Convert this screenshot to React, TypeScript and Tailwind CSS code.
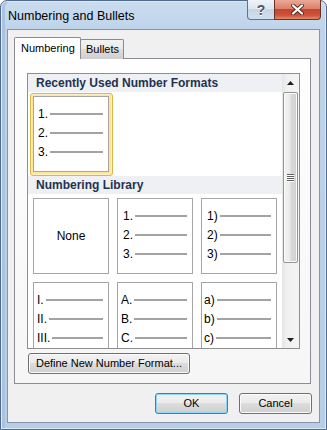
import React from 'react';

const font = "font-['Liberation_Sans',Arial,sans-serif]";

function Preview({ labels, pad }: { labels: string[]; pad: string }) {
  return (
    <div className={`flex h-full flex-col pt-[7px] pr-[5px] ${pad}`}>
      {labels.map((l) => (
        <div key={l} className="flex h-[19px] items-center">
          <span className="text-[12px] leading-none text-black">{l}</span>
          <span className="ml-[2px] h-[2px] flex-1 bg-[#a3a3a3]" />
        </div>
      ))}
    </div>
  );
}

function Box({ children }: { children: React.ReactNode }) {
  return <div className="h-[76px] w-[76px] border border-[#a5a5a5] bg-white">{children}</div>;
}

function Cell({ children }: { children: React.ReactNode }) {
  return <div className="flex h-[84px] w-[84px] shrink-0 items-center justify-center">{children}</div>;
}

function Header({ text }: { text: string }) {
  return (
    <div className="flex h-[18px] shrink-0 items-center bg-[#eef0f3] pl-[8px] text-[12px] font-bold text-[#1f3251]">
      {text}
    </div>
  );
}

function WinButton({ label, primary, className }: { label: string; primary?: boolean; className: string }) {
  return (
    <div
      className={`flex h-[21px] items-center justify-center rounded-[3px] border text-[11px] text-black bg-[linear-gradient(#f2f2f2,#ebebeb_45%,#dddddd_50%,#cfcfcf)] ${
        primary
          ? 'border-[#3c7fb1] shadow-[inset_0_0_0_1px_#8fd6f6]'
          : 'border-[#707070] shadow-[inset_0_0_0_1px_#fbfbfb]'
      } ${className}`}
    >
      {label}
    </div>
  );
}

function Triangle({ up }: { up?: boolean }) {
  return (
    <svg width="7" height="4" viewBox="0 0 7 4">
      <path d={up ? 'M0 4 L3.5 0 L7 4 Z' : 'M0 0 L3.5 4 L7 0 Z'} fill="#1e1e1e" />
    </svg>
  );
}

export default function App() {
  return (
    <div className={`h-[430px] w-[327px] ${font}`}>
      <div className="flex h-full flex-col rounded-t-[7px] border border-[#4f6a8b] bg-[linear-gradient(180deg,#cbdcef_0%,#bed3ea_7%,#b8cee7_100%)] shadow-[inset_0_0_0_1px_#dfeaf6,inset_3px_0_0_1px_#a9c3e0]">
        {/* title bar */}
        <div className="flex h-[28px] shrink-0 items-start justify-between pl-[7px] pr-[5px]">
          <span className="self-center pt-[2px] text-[12.5px] text-black">Numbering and Bullets</span>
          <div className="-mt-px flex">
            <div className="flex h-[20px] w-[28px] items-center justify-center rounded-bl-[4px] border border-t-0 border-[#5d7594] bg-[linear-gradient(#eef3f9,#dde6f1_45%,#c6d4e5_50%,#d3dfed)] text-[14px] font-bold leading-none text-[#4a5868] [text-shadow:0_1px_0_#ffffff]">
              ?
            </div>
            <div className="-ml-px flex h-[20px] w-[47px] items-center justify-center rounded-br-[4px] border border-t-0 border-[#6b3128] bg-[linear-gradient(#eaa996,#db816b_45%,#c5452e_50%,#cf523a_80%,#e48a69)]">
              <svg width="13" height="11" viewBox="0 0 13 11">
                <path d="M2 1.5 L11 9.5 M11 1.5 L2 9.5" stroke="#5a2a22" strokeWidth="4" strokeLinecap="round" />
                <path d="M2 1.5 L11 9.5 M11 1.5 L2 9.5" stroke="#ffffff" strokeWidth="2.2" strokeLinecap="round" />
              </svg>
            </div>
          </div>
        </div>

        {/* client area */}
        <div className="mx-[6px] mb-[6px] flex flex-1 flex-col border border-[#8594a8] bg-[#f0f0f0] pt-[7px]">
          <div className="pl-[6px] pr-[8px]">
            {/* tabs */}
            <div className="flex h-[22px] items-end">
              <div className="relative z-10 flex h-[22px] w-[67px] items-center rounded-t-[2px] border border-b-0 border-[#898c95] bg-white pb-[1px] pl-[6px] text-[11px] text-black">
                Numbering
              </div>
              <div className="-ml-px flex h-[20px] w-[44px] items-center rounded-t-[2px] border border-b-0 border-[#898c95] bg-[linear-gradient(#f2f2f2,#ebebeb_45%,#dddddd_50%,#cfcfcf)] pl-[5px] text-[11px] text-black">
                Bullets
              </div>
            </div>

            {/* panel */}
            <div className="-mt-px border border-[#898c95] bg-[linear-gradient(#fefefe,#f6f6f6)] pt-[14px] pr-[10px] pb-[9px] pl-[12px]">
              <div className="flex h-[276px] border border-[#8e8f8f] bg-white">
                <div className="flex flex-1 flex-col overflow-hidden">
                  <Header text="Recently Used Number Formats" />
                  <div className="flex pl-[1px]">
                    <Cell>
                      <div className="flex h-[83px] w-[83px] items-center justify-center rounded-[3px] border border-[#e0b445] bg-[#fde59a] shadow-[inset_0_0_0_1px_#fff0c0]">
                        <Box>
                          <Preview labels={['1.', '2.', '3.']} pad="pl-[4px]" />
                        </Box>
                      </div>
                    </Cell>
                  </div>
                  <Header text="Numbering Library" />
                  <div className="flex pl-[1px]">
                    <Cell>
                      <Box>
                        <div className="flex h-full items-center justify-center text-[12px] text-black">None</div>
                      </Box>
                    </Cell>
                    <Cell>
                      <Box>
                        <Preview labels={['1.', '2.', '3.']} pad="pl-[5px]" />
                      </Box>
                    </Cell>
                    <Cell>
                      <Box>
                        <Preview labels={['1)', '2)', '3)']} pad="pl-[5px]" />
                      </Box>
                    </Cell>
                  </div>
                  <div className="flex pl-[1px]">
                    <Cell>
                      <Box>
                        <Preview labels={['I.', 'II.', 'III.']} pad="pl-[3px]" />
                      </Box>
                    </Cell>
                    <Cell>
                      <Box>
                        <Preview labels={['A.', 'B.', 'C.']} pad="pl-[3px]" />
                      </Box>
                    </Cell>
                    <Cell>
                      <Box>
                        <Preview labels={['a)', 'b)', 'c)']} pad="pl-[2px]" />
                      </Box>
                    </Cell>
                  </div>
                </div>

                {/* scrollbar */}
                <div className="flex w-[17px] shrink-0 flex-col bg-[linear-gradient(to_right,#e6e6e6,#f1f1f1_35%,#f4f4f4)]">
                  <div className="flex h-[17px] items-center justify-center">
                    <Triangle up />
                  </div>
                  <div className="mx-[1px] mt-[1px] flex h-[171px] flex-col items-center justify-center gap-[1px] rounded-[2px] border border-[#959595] bg-[linear-gradient(to_right,#f4f4f4,#e9e9e9_45%,#d8d8d8_55%,#d0d0d0)] shadow-[inset_0_0_0_1px_#fafafa]">
                    {[0, 1, 2, 3].map((i) => (
                      <span key={i} className="h-[1px] w-[7px] bg-[#606060] shadow-[0_1px_0_#ffffff]" />
                    ))}
                  </div>
                  <div className="flex-1" />
                  <div className="flex h-[17px] items-center justify-center">
                    <Triangle />
                  </div>
                </div>
              </div>

              <WinButton label="Define New Number Format..." className="ml-[1px] mt-[4px] w-[162px]" />
            </div>
          </div>

          {/* dialog buttons */}
          <div className="mt-[9px] flex justify-end gap-[11px] pr-[7px]">
            <WinButton label="OK" primary className="w-[73px]" />
            <WinButton label="Cancel" className="w-[73px]" />
          </div>
        </div>
      </div>
    </div>
  );
}
